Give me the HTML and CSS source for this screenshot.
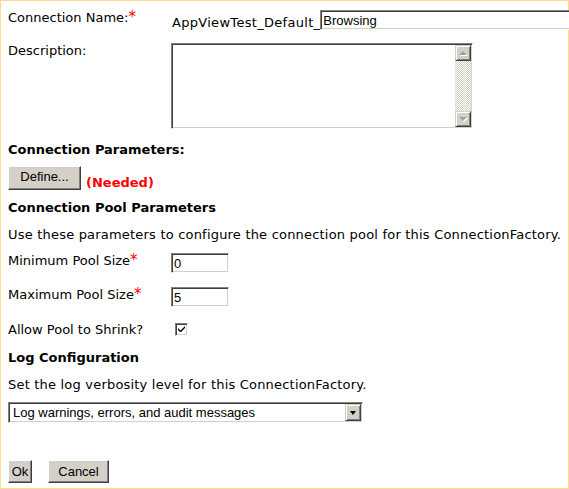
FILE: index.html
```html
<!DOCTYPE html>
<html>
<head>
<meta charset="utf-8">
<link rel="stylesheet" href="styles.css">
</head>
<body>
<div class="page">
  <div class="field field-name">
    <div class="label">Connection Name:<span class="req">*</span></div>
    <div class="value value-name">
      <span class="prefix">AppViewTest_Default_</span>
      <input class="text-input name-input" type="text" value="Browsing">
    </div>
  </div>

  <div class="field field-desc">
    <div class="label">Description:</div>
    <div class="textarea">
      <div class="ta-body"></div>
      <div class="vscroll">
        <div class="sb-btn sb-up"><span class="arrow-up"></span></div>
        <div class="sb-track"></div>
        <div class="sb-btn sb-down"><span class="arrow-down"></span></div>
      </div>
    </div>
  </div>

  <h3 class="section conn-params">Connection Parameters:</h3>
  <div class="define-row">
    <button class="btn btn-define">Define...</button>
    <span class="needed">(Needed)</span>
  </div>

  <h3 class="section pool-title">Connection Pool Parameters</h3>
  <p class="hint pool-hint">Use these parameters to configure the connection pool for this ConnectionFactory.</p>

  <div class="field field-min">
    <div class="label">Minimum Pool Size<span class="req">*</span></div>
    <input class="text-input small-input" type="text" value="0">
  </div>
  <div class="field field-max">
    <div class="label">Maximum Pool Size<span class="req">*</span></div>
    <input class="text-input small-input" type="text" value="5">
  </div>
  <div class="field field-shrink">
    <div class="label">Allow Pool to Shrink?</div>
    <span class="checkbox">
      <svg width="7" height="7" viewBox="0 0 7 7"><path d="M0 2 L0 4 L2 6 L3 6 L7 2 L7 0 L2.5 4.5 Z" fill="#000"/></svg>
    </span>
  </div>

  <h3 class="section log-title">Log Configuration</h3>
  <p class="hint log-hint">Set the log verbosity level for this ConnectionFactory.</p>
  <div class="select">
    <span class="select-text">Log warnings, errors, and audit messages</span>
    <span class="select-btn"><span class="arrow-down dark"></span></span>
  </div>

  <div class="actions">
    <button class="btn btn-ok">Ok</button>
    <button class="btn btn-cancel">Cancel</button>
  </div>
</div>
</body>
</html>
```

FILE: styles.css
```css
html, body {
  margin: 0;
  padding: 0;
  overflow: hidden;
  background: #fff;
}
.page {
  box-sizing: border-box;
  width: 569px;
  height: 489px;
  border: 1px solid #ffd98f;
  padding: 9px 7px 0 7px;
  font-family: "DejaVu Sans", Verdana, sans-serif;
  font-size: 13px;
  line-height: 15px;
  color: #000;
}
.field {
  display: flex;
  align-items: flex-start;
}
.label {
  width: 163px;
  flex: none;
  white-space: nowrap;
}
.req {
  color: #f00;
  font-size: 15px;
}
.value-name {
  display: flex;
  align-items: flex-end;
  height: 20px;
}
.prefix {
  line-height: 15px;
  margin-left: 1px;
  letter-spacing: 0.3px;
}
.text-input {
  box-sizing: border-box;
  height: 20px;
  margin: 0;
  padding: 1px 2px 0 2px;
  font-family: "Liberation Sans", Arial, sans-serif;
  font-size: 13px;
  color: #000;
  background: #fff;
  border: 1px solid;
  border-color: #808080 #fff #fff #808080;
  box-shadow: inset 1px 1px 0 #404040, inset -1px -1px 0 #d4d0c8;
  outline: none;
}
.name-input {
  width: 260px;
}
.small-input {
  width: 58px;
}
.field-desc {
  margin-top: 13px;
}
.textarea {
  box-sizing: border-box;
  width: 302px;
  height: 86px;
  display: flex;
  border: 1px solid;
  border-color: #808080 #fff #fff #808080;
  box-shadow: inset 1px 1px 0 #404040, inset -1px -1px 0 #d4d0c8;
  padding: 1px;
  background: #fff;
}
.ta-body {
  flex: 1;
}
.vscroll {
  width: 16px;
  display: flex;
  flex-direction: column;
}
.sb-btn {
  box-sizing: border-box;
  width: 16px;
  height: 16px;
  background: #d4d0c8;
  border: 1px solid;
  border-color: #d4d0c8 #404040 #404040 #d4d0c8;
  box-shadow: inset 1px 1px 0 #fff, inset -1px -1px 0 #808080;
  display: flex;
  align-items: center;
  justify-content: center;
}
.sb-track {
  flex: 1;
  background-color: #fff;
  background-image: conic-gradient(#d4d0c8 25%, #fff 0 50%, #d4d0c8 0 75%, #fff 0);
  background-size: 2px 2px;
}
.arrow-up {
  width: 0;
  height: 0;
  border-left: 4px solid transparent;
  border-right: 4px solid transparent;
  border-bottom: 4px solid #a0a0a0;
  filter: drop-shadow(1px 1px 0 #fff);
}
.arrow-down {
  width: 0;
  height: 0;
  border-left: 4px solid transparent;
  border-right: 4px solid transparent;
  border-top: 4px solid #a0a0a0;
  filter: drop-shadow(1px 1px 0 #fff);
}
.arrow-down.dark {
  border-left-width: 3.5px;
  border-right-width: 3.5px;
  border-top: 4px solid #000;
  filter: none;
}
.section {
  margin: 0;
  font-size: 13px;
  line-height: 15px;
  font-weight: bold;
}
.conn-params {
  margin-top: 13px;
}
.define-row {
  margin-top: 9px;
  display: flex;
  align-items: flex-end;
}
.btn {
  box-sizing: border-box;
  margin: 0;
  padding: 0;
  height: 23px;
  background: #d4d0c8;
  border: 1px solid;
  border-color: #fff #404040 #404040 #fff;
  box-shadow: inset -1px -1px 0 #808080, inset 1px 1px 0 #d4d0c8;
  font-family: "Liberation Sans", Arial, sans-serif;
  font-size: 13px;
  color: #000;
}
.btn-define {
  width: 73px;
  height: 24px;
  padding-bottom: 3px;
}
.needed {
  color: #f00;
  font-weight: bold;
  margin-left: 5px;
  line-height: 15px;
}
.pool-title {
  margin-top: 10px;
}
.hint {
  margin: 0;
  letter-spacing: 0.2px;
  white-space: nowrap;
}
.pool-hint {
  margin-top: 12px;
}
.field-min {
  margin-top: 11px;
}
.field-max {
  margin-top: 14px;
}
.field-shrink {
  margin-top: 15px;
}
.checkbox {
  box-sizing: border-box;
  width: 13px;
  height: 13px;
  margin: 1px 0 0 4px;
  border: 1px solid;
  border-color: #808080 #fff #fff #808080;
  box-shadow: inset 1px 1px 0 #404040, inset -1px -1px 0 #d4d0c8;
  background: #fff;
  display: flex;
  align-items: center;
  justify-content: center;
}
.checkbox svg {
  display: block;
}
.log-title {
  margin-top: 13px;
}
.log-hint {
  margin-top: 12px;
}
.select {
  box-sizing: border-box;
  margin-top: 10px;
  width: 355px;
  height: 21px;
  display: flex;
  align-items: stretch;
  border: 1px solid;
  border-color: #808080 #fff #fff #808080;
  box-shadow: inset 1px 1px 0 #404040, inset -1px -1px 0 #d4d0c8;
  padding: 1px;
  background: #fff;
}
.select-text {
  flex: 1;
  padding-left: 3px;
  font-family: "Liberation Sans", Arial, sans-serif;
  font-size: 13px;
  line-height: 17px;
}
.select-btn {
  box-sizing: border-box;
  width: 16px;
  background: #d4d0c8;
  border: 1px solid;
  border-color: #d4d0c8 #404040 #404040 #d4d0c8;
  box-shadow: inset 1px 1px 0 #fff, inset -1px -1px 0 #808080;
  display: flex;
  align-items: center;
  justify-content: center;
}
.actions {
  margin-top: 37px;
  display: flex;
  gap: 16px;
}
.btn-ok {
  width: 24px;
}
.btn-cancel {
  width: 61px;
}
```
